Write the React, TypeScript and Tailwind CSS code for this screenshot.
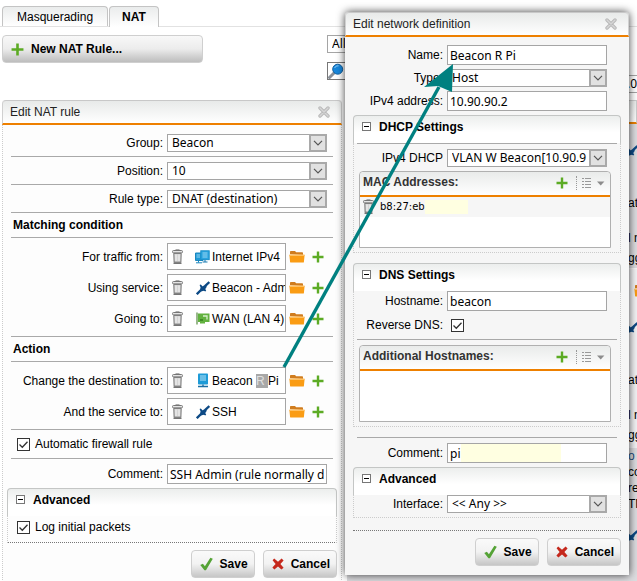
import { useId, type ReactNode } from 'react'
import clsx from 'clsx'

const PlusIcon = ({ className = 'size-3' }: { className?: string }) => (
  <svg viewBox="0 0 12 12" className={clsx('shrink-0', className)} aria-hidden="true">
    <path d="M4.8 0.5h2.4v4.3h4.3v2.4H7.2v4.3H4.8V7.2H0.5V4.8h4.3z" fill="#5cab24" />
  </svg>
)

const CloseIcon = () => (
  <svg viewBox="0 0 12 12" className="size-3" aria-hidden="true">
    <path d="M2 2l8 8M10 2l-8 8" stroke="#b9b9b9" strokeWidth="3.4" strokeLinecap="round" />
    <path d="M2 2l8 8M10 2l-8 8" stroke="#d6d6d6" strokeWidth="1.4" strokeLinecap="round" />
  </svg>
)

const TrashIcon = () => (
  <svg viewBox="0 0 12 16" className="w-3 h-4 shrink-0" aria-hidden="true">
    <rect x="0.5" y="1.5" width="10" height="2.4" rx="1" fill="#e4e4e4" stroke="#777" />
    <path d="M3.5 0.9h4" stroke="#777" />
    <path d="M1.8 4.4l0.3 8.8h6.8l0.3-8.8z" fill="#d4d4d4" stroke="#777" />
    <path d="M4 5.5v6.5M7 5.5v6.5" stroke="#f4f4f4" />
    <path d="M1.5 14.2h8" stroke="#666" strokeWidth="1.4" />
  </svg>
)

const FolderIcon = () => (
  <svg viewBox="0 0 16 13" className="w-4 h-[13px] shrink-0" aria-hidden="true">
    <path d="M1 4.2V1.8q0-.8.8-.8h4.2l1.2 1.2h6q.8 0 .8.8V5z" fill="#d07c1e" />
    <path d="M0.4 5h15.2l-.7 7q0 .6-.8.6H1.9q-.7 0-.8-.6z" fill="#fa9c14" />
    <path d="M0.4 4.6h15.2l-.2 1.4H.6z" fill="#ffc163" />
  </svg>
)

const ServiceIcon = () => (
  <svg viewBox="0 0 14 14" className="size-3.5 shrink-0" aria-hidden="true">
    <path d="M0.8 13.2L5 9M9 5.2L13.4 1" stroke="#0d4a85" strokeWidth="2.4" />
    <path d="M3.6 4l1.2-.6 5.4 5.8-.8 1.2L7.8 9.8 5 10.6 3.8 9.4l.8-3z" fill="#0d4a85" />
    <path d="M4.6 7L8.2 4.2 10.4 4l.2 2L9 8.6 6 10z" fill="#0d4a85" />
  </svg>
)

const InternetIcon = () => (
  <svg viewBox="0 0 15 14" className="w-[15px] h-3.5 shrink-0" aria-hidden="true">
    <path d="M0.5 3h7.5v7.5H0.5zM3.5 10v2.5M1 12.8h6" fill="#1f9ad6" stroke="#1a86be" />
    <rect x="5.8" y="0.8" width="8.4" height="8.8" fill="#2aa4df" stroke="#1c8fca" />
    <path d="M7.5 3h5M7.5 5h5M7.5 7h5M1.5 5h3.5M1.5 7h3.5" stroke="#a7dcf5" strokeWidth="0.9" />
    <path d="M10 10v2M7.5 12h5" stroke="#1577ae" />
  </svg>
)

const HostIcon = () => (
  <svg viewBox="0 0 14 15" className="w-3.5 h-[15px] shrink-0" aria-hidden="true">
    <rect x="2" y="0.5" width="10" height="11" rx="0.8" fill="#1e9bd7" />
    <path d="M4 3h6M4 5h6M4 7h6" stroke="#b7e3f7" />
    <path d="M7 11.5v2M2 13.5h10" stroke="#1a6fa5" strokeWidth="1.4" />
  </svg>
)

const NicIcon = () => (
  <svg viewBox="0 0 14 13" className="w-3.5 h-[13px] shrink-0" aria-hidden="true">
    <path d="M1 0.5v12" stroke="#6f9a5c" strokeWidth="1.4" />
    <path d="M2 1.5h11.5v8.5H9v1.5H4V10H2z" fill="#62b23f" />
    <path d="M7 4h4v3.5" fill="none" stroke="#d9f0ce" strokeWidth="1.3" />
    <path d="M4 7h3v2H4z" fill="#3f8a25" />
  </svg>
)

const CheckIcon = () => (
  <svg viewBox="0 0 14 14" className="w-[13px] h-3.5 shrink-0" aria-hidden="true">
    <path d="M0.3 8.2l2.8-1.6 2.2 2.8L11.2 0.4l2.6 1L6.4 13.6H4.8z" fill="#55a336" />
  </svg>
)

const CrossIcon = () => (
  <svg viewBox="0 0 12 12" className="size-3 shrink-0" aria-hidden="true">
    <path d="M2.2 0.4L6 3.8 9.6 0.4l2 2L8.4 6l3.2 3.8-2.2 1.8L6 8.4l-3.6 3.2-2-2L3.6 6 0.6 2.2z" fill="#c5281c" />
  </svg>
)

const MenuIcon = () => (
  <svg viewBox="0 0 24 12" className="w-6 h-3" aria-hidden="true">
    <path d="M1 1.5h2M4 1.5h6M1 4.5h2M4 4.5h6M1 7.5h2M4 7.5h6M1 10.5h2M4 10.5h6" stroke="#999" />
    <path d="M16 4.5h7.4L19.7 8.5z" fill="#8c8c8c" />
  </svg>
)

const SearchIcon = () => (
  <svg viewBox="0 0 16 16" className="size-4 shrink-0" aria-hidden="true">
    <path d="M1.5 14.5l4.5-4.5" stroke="#8a9098" strokeWidth="3" strokeLinecap="round" />
    <circle cx="9.7" cy="6.2" r="5" fill="#1787dc" stroke="#125f9e" />
    <path d="M6.6 5a3.6 3.6 0 0 1 4-2.2" stroke="#8fcdf8" fill="none" />
  </svg>
)

const Field = ({ label, htmlFor, children }: { label: string; htmlFor?: string; children: ReactNode }) => (
  <div className="flex items-center gap-1">
    <label htmlFor={htmlFor} className="flex-1 text-right whitespace-nowrap">{label}</label>
    {children}
  </div>
)

const SelectField = ({ label, value }: { label: string; value: string }) => {
  const id = useId()
  return (
    <Field label={label} htmlFor={id}>
      <div className="relative w-40">
        <select
          id={id}
          className="block w-full h-[18px] appearance-none border border-[#a5a5a5] bg-white pl-1 pr-[18px] font-['Noto_Sans'] text-xs leading-4 text-black"
        >
          <option>{value}</option>
        </select>
        <span className="pointer-events-none absolute right-0 top-0 flex h-[18px] w-[18px] items-center justify-center border-2 border-[#a9a9a9] bg-[#e1e1e1]">
          <svg viewBox="0 0 10 6" className="w-2.5 h-1.5"><path d="M1 0.8L5 4.8l4-4" fill="none" stroke="#555" strokeWidth="1.2" /></svg>
        </span>
      </div>
    </Field>
  )
}

const TextField = ({ label, value, masked }: { label: string; value: string; masked?: boolean }) => {
  const id = useId()
  return (
    <Field label={label} htmlFor={id}>
      <div className="relative w-40">
        <input
          id={id}
          defaultValue={value}
          className="block w-full h-5 border border-[#a5a5a5] bg-white px-0.5 font-['Noto_Sans'] text-xs leading-4 text-black"
        />
        {masked && <span className="absolute left-3.5 top-px h-[18px] w-[100px] bg-[#ffffe1]" />}
      </div>
    </Field>
  )
}

const Checkbox = ({ id }: { id: string }) => (
  <span className="relative flex size-[13px] shrink-0">
    <input id={id} type="checkbox" defaultChecked className="size-[13px] appearance-none border border-[#333] bg-white" />
    <svg viewBox="0 0 13 13" className="pointer-events-none absolute inset-0 size-[13px]" aria-hidden="true">
      <path d="M2.5 6.5l2.8 2.8 5.2-5.6" fill="none" stroke="#333" strokeWidth="1.3" />
    </svg>
  </span>
)

const ObjectField = ({ label, icon, children }: { label: string; icon: ReactNode; children: ReactNode }) => (
  <div className="flex items-center">
    <span className="flex-1 text-right whitespace-nowrap pr-1">{label}</span>
    <div className="flex h-[27px] w-[119px] items-center overflow-hidden border border-[#a5a5a5] bg-white pl-1">
      <button type="button" aria-label="Remove"><TrashIcon /></button>
      <span className="flex w-7 shrink-0 justify-end pr-0.5">{icon}</span>
      <span className="whitespace-nowrap">{children}</span>
    </div>
    <div className="flex w-[41px] items-center justify-between px-[3px]">
      <button type="button" aria-label="Browse"><FolderIcon /></button>
      <button type="button" aria-label="Add"><PlusIcon /></button>
    </div>
  </div>
)

const Rule = () => <hr className="border-0 border-t border-[#a9a9a9]" />

const ActionButton = ({ icon, children }: { icon: ReactNode; children: ReactNode }) => (
  <button
    type="button"
    className="flex h-7 items-center gap-[7px] rounded border border-[#cfcfcf] bg-linear-to-b from-[#fafafa] via-[#f2f2f2] to-[#c6c6c6] pl-2 pr-1.5 text-xs font-bold"
  >
    {icon}
    {children}
  </button>
)

const Buttons = () => (
  <div className="flex justify-end gap-2">
    <ActionButton icon={<CheckIcon />}>Save</ActionButton>
    <ActionButton icon={<CrossIcon />}>Cancel</ActionButton>
  </div>
)

const SectionTitle = ({ children }: { children: ReactNode }) => (
  <h3 className="flex h-7 items-center gap-2 rounded-t border border-b-0 border-[#c4c6c5] bg-linear-to-b from-[#eceeed] to-white to-60% px-2 pb-1.5 font-bold">
    <button type="button" aria-label="Collapse" className="flex size-[9px] items-center justify-center border border-[#777] bg-white">
      <span className="h-px w-[5px] bg-black" />
    </button>
    {children}
  </h3>
)

const TitleBar = ({ title }: { title: string }) => (
  <div className="flex h-[25px] items-center justify-between rounded-t border-x border-t border-b-2 border-x-[#d0d0d0] border-t-[#c8c8c8] border-b-[#ee8000] bg-linear-to-b from-[#e8eae9] to-white px-[7px] pb-px">
    <h2 className="text-[#222]">{title}</h2>
    <button type="button" aria-label="Close" className="pr-1"><CloseIcon /></button>
  </div>
)

const ListBox = ({ title, children }: { title: string; children?: ReactNode }) => (
  <div className="h-[77px] rounded-t border border-[#b0b0b0] bg-white">
    <div className="flex h-[25px] items-center border-b-2 border-[#ee8000] rounded-t bg-linear-to-b from-[#e9ebea] to-white pl-[3px] pr-[5px] pb-px">
      <h4 className="flex-1 font-bold text-[#333] pb-0.5">{title}</h4>
      <button type="button" aria-label="Add"><PlusIcon /></button>
      <span className="ml-2 mr-1 h-3.5 border-l border-dotted border-[#999]" />
      <button type="button" aria-label="List options"><MenuIcon /></button>
    </div>
    {children}
  </div>
)

const NatRulePanel = () => {
  const firewallId = useId()
  const logId = useId()
  return (
    <form className="bg-[#fdfdfd]">
      <TitleBar title="Edit NAT rule" />
      <div className="border-x border-dotted border-[#ccc]">
        <div className="px-2 pt-1">
          <div className="flex flex-col gap-1 pt-[5px]">
            <div className="pr-1.5"><SelectField label="Group:" value="Beacon" /></div>
            <Rule />
          </div>
          <div className="flex flex-col gap-1 pt-[5px]">
            <div className="pr-1.5"><SelectField label="Position:" value="10" /></div>
            <Rule />
          </div>
          <div className="flex flex-col gap-1 pt-[5px]">
            <div className="pr-1.5"><SelectField label="Rule type:" value="DNAT (destination)" /></div>
            <Rule />
          </div>
          <h3 className="flex h-6 items-center pl-0.5 font-bold">Matching condition</h3>
          <Rule />
          <div className="flex flex-col gap-1 pt-[5px] pb-1 pr-1.5">
            <ObjectField label="For traffic from:" icon={<InternetIcon />}>Internet IPv4</ObjectField>
            <ObjectField label="Using service:" icon={<ServiceIcon />}>Beacon - Adm</ObjectField>
            <ObjectField label="Going to:" icon={<NicIcon />}>WAN (LAN 4)</ObjectField>
          </div>
          <Rule />
          <h3 className="flex h-6 items-center pl-0.5 font-bold">Action</h3>
          <Rule />
          <div className="flex flex-col gap-1 pt-[5px] pb-1 pr-1.5">
            <ObjectField label="Change the destination to:" icon={<HostIcon />}>
              Beacon <mark className="bg-[#a8a8a8] text-[#e0e0e0]">R </mark>Pi
            </ObjectField>
            <ObjectField label="And the service to:" icon={<ServiceIcon />}>SSH</ObjectField>
          </div>
          <Rule />
          <div className="flex h-7 items-center gap-[5px] pl-1.5">
            <Checkbox id={firewallId} />
            <label htmlFor={firewallId}>Automatic firewall rule</label>
          </div>
          <Rule />
          <div className="pt-[5px] pb-1 pr-1.5"><TextField label="Comment:" value="SSH Admin (rule normally disabled)" /></div>
        </div>
        <div className="px-1">
          <SectionTitle>Advanced</SectionTitle>
          <div className="flex h-[27px] items-center gap-[5px] border-x border-b border-dotted border-x-[#ccc] border-b-[#777] px-[9px] pb-1">
            <Checkbox id={logId} />
            <label htmlFor={logId}>Log initial packets</label>
          </div>
          <div className="pt-[7px] pb-1"><Buttons /></div>
        </div>
      </div>
    </form>
  )
}

const NetworkDialog = () => {
  const dnsId = useId()
  return (
    <form
      role="dialog"
      aria-label="Edit network definition"
      className="absolute left-[345px] top-3 w-[284px] rounded-t bg-[#f6f6f6] pb-[9px] shadow-[0_0_8px_rgba(0,0,0,0.75)]"
    >
      <TitleBar title="Edit network definition" />
      <div className="flex flex-col gap-1 pt-2 pr-[22px] pb-1">
        <TextField label="Name:" value="Beacon R Pi" />
        <SelectField label="Type:" value="Host" />
        <TextField label="IPv4 address:" value="10.90.90.2" />
      </div>
      <div className="px-2">
        <SectionTitle>DHCP Settings</SectionTitle>
        <div className="border-x border-b border-dotted border-[#ccc] pb-1">
          <div className="px-[3px]"><Rule /></div>
          <div className="pt-[5px] pb-1 pr-[13px]"><SelectField label="IPv4 DHCP" value="VLAN W Beacon[10.90.9" /></div>
          <div className="pl-[5px] pr-[9px]">
            <ListBox title="MAC Addresses:">
              <div className="flex h-5 items-center bg-[#f6f6f6] pl-[3px] font-['DejaVu_Sans'] text-[10px]">
                <button type="button" aria-label="Remove" className="pr-[5px]"><TrashIcon /></button>
                <span>b8:27:eb</span>
                <span className="h-3.5 w-[43px] bg-[#ffffe1]" />
              </div>
            </ListBox>
          </div>
        </div>
        <div className="pt-2.5">
          <SectionTitle>DNS Settings</SectionTitle>
        </div>
        <div className="border-x border-b border-dotted border-[#ccc] pb-1">
          <div className="pr-[13px]"><TextField label="Hostname:" value="beacon" /></div>
          <div className="flex h-7 items-center gap-2 pr-[156px]">
            <label htmlFor={dnsId} className="flex-1 whitespace-nowrap text-right">Reverse DNS:</label>
            <Checkbox id={dnsId} />
          </div>
          <div className="px-[3px] pb-[5px]"><Rule /></div>
          <div className="pl-[5px] pr-[9px]"><ListBox title="Additional Hostnames:" /></div>
        </div>
        <div className="px-1 pt-2.5"><Rule /></div>
        <div className="pt-[5px] pb-1 pr-3.5"><TextField label="Comment:" value="pi" masked /></div>
        <SectionTitle>Advanced</SectionTitle>
        <div className="border-x border-b border-dotted border-[#ccc] pb-1 pr-[13px]">
          <SelectField label="Interface:" value="<< Any >>" />
        </div>
        <div className="mb-[7px] h-[13px] border-b border-dotted border-[#777]" />
        <Buttons />
      </div>
    </form>
  )
}

const ruleText = 'w-full whitespace-nowrap text-xs leading-4'

const RuleList = () => (
  <div className="flex min-w-0 flex-1 flex-col overflow-hidden pl-[5px]">
    <div className="h-6 border-x border-t border-[#ccc] rounded-tl bg-linear-to-b from-[#ebedec] to-white border-b-2 border-b-[#ee8000]" />
    <ul className="flex flex-1 flex-col *:pl-[281px]">
      <li className="h-[144px] bg-[#dcdcdf] pt-[21px]">
        <div className="-ml-1"><ServiceIcon /></div>
        <p className={clsx(ruleText, 'pt-9')}>at</p>
        <p className={clsx(ruleText, 'pt-[19px]')}>l n</p>
        <p className={clsx(ruleText, 'pt-1')}>gg</p>
      </li>
      <li className="h-[180px] border-t border-[#f8f8f8] bg-[#f2f2f4] pt-[15px]">
        <div className="pl-1.5"><FolderIcon /></div>
        <div className="-ml-1 pt-[25px]"><ServiceIcon /></div>
        <p className={clsx(ruleText, 'pt-9')}>at</p>
        <p className={clsx(ruleText, 'pt-[19px]')}>l n</p>
        <p className={clsx(ruleText, 'pt-1')}>gg</p>
      </li>
      <li className="flex-1 bg-[#dcdcdf]">
        <p className={clsx(ruleText, 'text-[#1c4f80]')}>o</p>
        <p className={ruleText}>co</p>
        <p className={ruleText}>re</p>
        <p className={clsx(ruleText, 'pb-[18px]')}>TM</p>
        <div className="-ml-1"><ServiceIcon /></div>
      </li>
    </ul>
  </div>
)

const App = () => {
  return (
    <div className="relative flex min-h-screen flex-col overflow-hidden bg-white font-['Liberation_Sans',sans-serif] text-xs leading-4 text-black">
      <nav className="flex h-[27px] items-end gap-px border-b border-[#e2e2e2] px-0.5">
        <a href="#masquerading" className="flex h-5 items-center rounded-t border border-b-0 border-[#c4c4c4] bg-linear-to-b from-[#eaecec] to-white px-3.5">
          Masquerading
        </a>
        <a href="#nat" className="-mb-px flex h-[21px] items-center rounded-t border border-b-0 border-[#c4c4c4] bg-linear-to-b from-[#eaecec] to-white px-3 font-bold">
          NAT
        </a>
      </nav>
      <div className="flex h-[73px] items-start pt-2 pl-0.5">
        <button
          type="button"
          className="flex h-7 w-[201px] items-center gap-[7px] rounded border border-[#cfcfcf] bg-linear-to-b from-[#f8f8f8] via-[#ececec] to-[#bdbdbd] px-2 text-xs font-bold"
        >
          <PlusIcon className="size-[13px]" />
          New NAT Rule...
        </button>
        <div className="ml-auto flex w-[310px] flex-col gap-[9px]">
          <select aria-label="Rule groups" className="h-[18px] w-40 appearance-none border border-[#a5a5a5] bg-white px-1 font-['Noto_Sans'] text-xs leading-4">
            <option>All</option>
          </select>
          <div className="flex h-[18px] w-40 items-center border border-[#777] bg-white">
            <SearchIcon />
            <input aria-label="Search" className="min-w-0 flex-1" />
          </div>
        </div>
        <span className="-ml-7 mt-10 h-[18px] w-7 border-y border-[#a5a5a5] pl-[18px] font-['Noto_Sans'] text-xs">.0</span>
      </div>
      <main className="flex flex-1 pl-0.5">
        <div className="w-[340px] shrink-0"><NatRulePanel /></div>
        <RuleList />
      </main>
      <NetworkDialog />
      {/* arrow from the destination object to its name */}
      <svg viewBox="0 0 200 320" className="pointer-events-none absolute left-[270px] top-[55px] h-80 w-[200px]" aria-hidden="true">
        <path d="M14 312L169 32" stroke="#008080" strokeWidth="3.4" />
        <path d="M183 9L154 32L168 31L182 37z" fill="#008080" />
      </svg>
    </div>
  )
}

export default App
